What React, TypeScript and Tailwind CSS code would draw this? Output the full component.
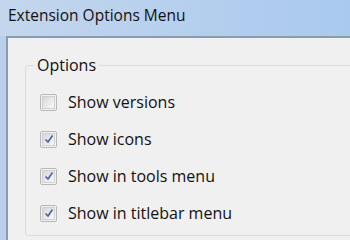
const options = [
  { label: 'Show versions', checked: false },
  { label: 'Show icons', checked: true },
  { label: 'Show in tools menu', checked: true },
  { label: 'Show in titlebar menu', checked: true },
];

function Checkbox({ checked }: { checked: boolean }) {
  return (
    <div className="grid h-[17px] w-[17px] shrink-0 place-items-center rounded-[2px] border border-[#b8b8b8] bg-[#f2f2f2]">
      <div className="grid h-[13px] w-[13px] place-items-center border border-[#d0d0d0] bg-gradient-to-br from-[#d6d6d6] to-[#fafafa]">
        {checked && (
          <svg width="10" height="10" viewBox="0 0 10 10">
            <path d="M1.5 5.5 L4 8 L8.5 1.5" fill="none" stroke="#4c5ea6" strokeWidth="1.6" />
          </svg>
        )}
      </div>
    </div>
  );
}

export default function App() {
  return (
    <div className="flex h-[240px] w-[350px] flex-col overflow-hidden bg-[#b3cdea] font-['Open_Sans',sans-serif] text-[#111]">
      <div className="flex h-[36px] shrink-0 items-center bg-gradient-to-r from-[#c3d6ec] to-[#a9c9ef] pl-[8px] pb-[4px] text-[15.5px]">
        Extension Options Menu
      </div>
      <div className="flex flex-1">
        <div className="w-[6px] shrink-0 bg-[#b8d0ea]" />
        <div className="flex-1 border-l-2 border-t-2 border-[#8a9bb0] bg-[#f0f0f0] pl-[17px] pt-[27px]">
          <div className="relative -mr-[20px] h-[171px] rounded-[3px] border border-[#d9dde2] pt-[20px]">
            <div className="absolute -top-[11px] left-[8px] bg-[#f0f0f0] px-[3px] text-[16px] leading-[20px]">
              Options
            </div>
            <div className="flex flex-col gap-[17px] pl-[14px] pt-[6px]">
              {options.map((o) => (
                <div key={o.label} className="flex h-[20px] items-center gap-[11px] text-[16px]">
                  <Checkbox checked={o.checked} />
                  <span>{o.label}</span>
                </div>
              ))}
            </div>
          </div>
        </div>
      </div>
    </div>
  );
}
